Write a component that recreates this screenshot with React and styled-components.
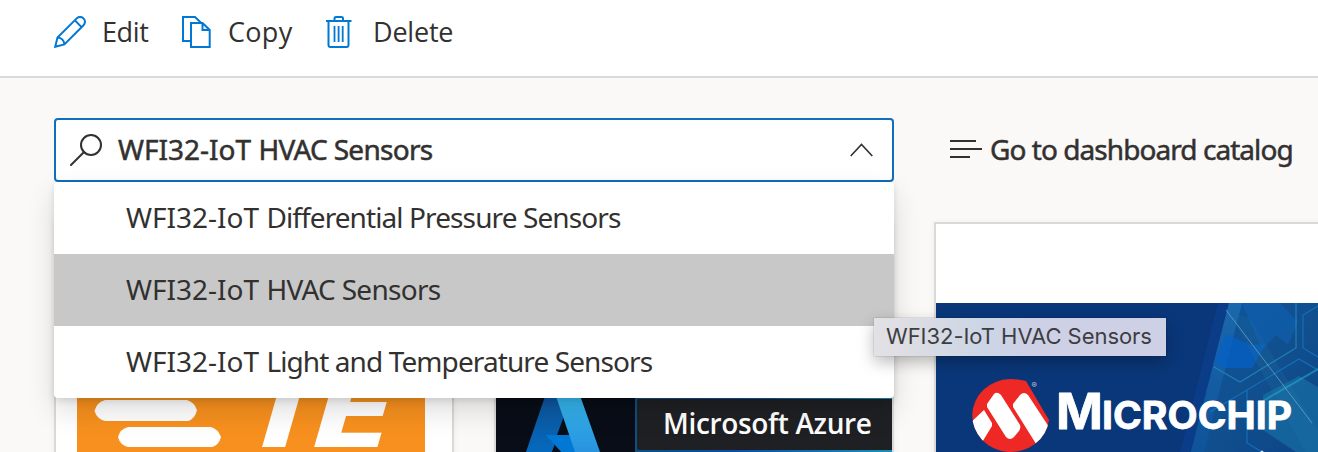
import React from "react";
import styled, { createGlobalStyle } from "styled-components";

const Global = createGlobalStyle`
  * { box-sizing: border-box; }
  html, body { margin: 0; overflow: hidden; }
  body { background: #faf9f8; font-family: "Noto Sans", "Open Sans", sans-serif; color: #323130; }
  svg { display: block; flex: none; }
`;

const Page = styled.div`
  width: 1318px;
  height: 452px;
  overflow: hidden;
  background: #faf9f8;
`;

const Toolbar = styled.header`
  display: flex;
  height: 78px;
  padding: 12px 0 0 54px;
  background: #fff;
  border-bottom: 2px solid #d8dada;
`;

const Command = styled.button`
  display: flex;
  align-items: center;
  gap: ${(p) => p.$gap}px;
  width: ${(p) => p.$width}px;
  height: 40px;
  padding: 0;
  border: 0;
  background: none;
  color: #323130;
  font: 400 27px/40px "Open Sans", "Noto Sans", sans-serif;
  letter-spacing: ${(p) => p.$spacing || 0}px;
  white-space: nowrap;
`;

const Main = styled.main`
  padding: 40px 0 0 54px;
`;

const PickerRow = styled.div`
  display: flex;
  align-items: center;
  gap: 56px;
  height: 64px;
`;

const Picker = styled.div`
  position: relative;
  flex: none;
  width: 840px;
  height: 64px;
`;

const Field = styled.div`
  display: flex;
  align-items: center;
  height: 64px;
  padding: 0 19px 0 14px;
  background: #fff;
  border: 2px solid #106ebe;
  border-radius: 4px;
`;

const Value = styled.span`
  flex: 1;
  padding: 0 0 2px 16px;
  font-size: 28px;
  line-height: 40px;
  -webkit-text-stroke: 0.5px #323130;
  white-space: nowrap;
`;

const Tight = styled.span`
  letter-spacing: ${(p) => p.$by}px;
`;

const Menu = styled.ul`
  position: absolute;
  z-index: 2;
  top: 64px;
  left: 0;
  width: 840px;
  margin: 0;
  padding: 0;
  list-style: none;
  background: #fff;
  border-radius: 4px;
  box-shadow: 0 12.8px 28.8px rgba(0, 0, 0, 0.132), 0 2.4px 7.2px rgba(0, 0, 0, 0.108);
`;

const Option = styled.li`
  height: 72px;
  padding-left: 72px;
  font-size: 28px;
  line-height: 70px;
  white-space: nowrap;
  background: ${(p) => (p.$active ? "#c8c8c8" : "transparent")};
`;

const Tooltip = styled.div`
  position: absolute;
  z-index: 3;
  top: 200px;
  left: 820px;
  width: 292px;
  height: 38px;
  padding-left: 12px;
  background: linear-gradient(90deg, #e2e1e5 0, #dcdde3 40px, #ccd6e5 105px, #ced1e6 150px, #ced1e6 100%);
  box-shadow: 0 0 1px rgba(0, 0, 0, 0.4), 0 6px 16px rgba(0, 0, 0, 0.28);
  color: #3d3e42;
  font: 400 22px/37px Inter, sans-serif;
  letter-spacing: -0.04px;
  white-space: nowrap;
`;

const CatalogLink = styled.a`
  display: flex;
  align-items: center;
  gap: 8px;
  padding-bottom: 2px;
  font-size: 28px;
  line-height: 40px;
  letter-spacing: -0.94px;
  -webkit-text-stroke: 0.5px #323130;
  white-space: nowrap;
`;

const Cards = styled.section`
  display: flex;
  gap: 40px;
  margin-top: 40px;
`;

const Card = styled.article`
  flex: none;
  width: 400px;
  height: 400px;
  padding: 79px 0 0 ${(p) => p.$inset || 0}px;
  background: #fff;
  border: 2px solid #d9d9d9;
  box-shadow: 0 1px 6px rgba(0, 0, 0, 0.06);
`;

const PencilIcon = () => (
  <svg width="32" height="32" viewBox="0 0 32 32" fill="none" stroke="#0078d4" strokeWidth="2">
    <path d="M1.2 30.8 3.5 21.5 22.7 2.4a4.7 4.7 0 0 1 6.8 0 4.7 4.7 0 0 1 0 6.8L10.4 28.4Z" />
    <path d="M20.8 4.3 27.6 11.1M3.5 21.5c3.8.2 6.6 3 6.9 6.9" />
  </svg>
);

const CopyIcon = () => (
  <svg width="30" height="32" viewBox="0 0 30 32" fill="none" stroke="#0078d4" strokeWidth="2">
    <path d="M8 25H1V1H13L19 6.7" />
    <path d="M9 7H20.5L27.7 14V31H9ZM20.5 7V14H27.7" />
  </svg>
);

const TrashIcon = () => (
  <svg width="26" height="32" viewBox="0 0 26 32" fill="none" stroke="#0078d4" strokeWidth="2">
    <path d="M0 5H25.5M8.500 5V2.500Q8.500 1 10 1H15.500Q17 1 17 2.500V5M2.500 5V29Q2.500 31 4.500 31H20.500Q22.500 31 22.500 29V5" />
    <path strokeWidth="1.800" d="M8.500 10V26M12.600 10V26M16.700 10V26" />
  </svg>
);

const SearchIcon = () => (
  <svg width="32" height="32" viewBox="0 0 32 32" fill="none" stroke="#323130" strokeWidth="2">
    <circle cx="21" cy="11" r="10" />
    <path d="M14 18 1 31" strokeLinecap="round" />
  </svg>
);

const ChevronUpIcon = () => (
  <svg width="23" height="14" viewBox="0 0 23 14" fill="none" stroke="#323130" strokeWidth="1.600">
    <path d="M.7 13 11.500 1.500 22.300 13" />
  </svg>
);

const LinesIcon = () => (
  <svg width="32" height="20" viewBox="0 0 32 20" stroke="#323130" strokeWidth="2">
    <path d="M0 2H26M0 10H32M0 18H20" />
  </svg>
);

const TeBanner = () => (
  <svg width="348" height="149" viewBox="77 303 348 149">
    <rect x="77" y="303" width="348" height="149" fill="#f7901e" />
    <g fill="#fff">
      <path d="M105 400H187Q194 402 197 410Q195 419 188 421H105Q97 419 94.500 411Q97 402 105 400Z" />
      <path d="M128 427H211Q218 429 221 437Q219 445 212 447H128Q120 445 118 437Q120 429 128 427Z" />
      <g fontFamily="DejaVu Sans" fontWeight="700" fontSize="100">
        <text transform="translate(232 447) skewX(-16) scale(1.22 1)">T</text>
        <text transform="translate(303 447) skewX(-16) scale(1.22 1)">E</text>
      </g>
    </g>
  </svg>
);

const AzureBanner = () => (
  <svg width="396" height="149" viewBox="496 303 396 149">
    <defs>
      <linearGradient id="azLeft" x1="0" y1="0" x2="0" y2="1">
        <stop offset="0" stopColor="#114a8b" />
        <stop offset="1" stopColor="#0669bc" />
      </linearGradient>
      <linearGradient id="azRight" x1="0" y1="0" x2="0" y2="1">
        <stop offset="0" stopColor="#3ccbf4" />
        <stop offset="1" stopColor="#2892df" />
      </linearGradient>
      <linearGradient id="azEdge">
        <stop offset="0" stopColor="#0f4f80" />
        <stop offset=".4" stopColor="#0c4fa3" />
        <stop offset="1" stopColor="#1c8fb4" />
      </linearGradient>
    </defs>
    <rect x="496" y="303" width="396" height="149" fill="#080d17" />
    <path d="M554 370H581L564 418L552 452H526Z" fill="url(#azLeft)" />
    <path d="M564 416 557 435H571Z" fill="#080d17" />
    <path d="M546 435H572L580 452H561Z" fill="#0078d4" />
    <path d="M555 446 561 452H552Z" fill="#080d17" />
    <path d="M547 370H571L600 452H575Z" fill="url(#azRight)" />
    <rect x="635" y="397" width="257" height="55" fill="url(#azEdge)" />
    <rect x="637" y="399" width="257" height="51" rx="2" fill="#1f2024" />
    <text x="663" y="434" fill="#fff" fontFamily="Open Sans, Noto Sans, sans-serif" fontSize="28" fontWeight="600" textLength="209">Microsoft Azure</text>
  </svg>
);

const MicrochipBanner = () => (
  <svg width="382" height="149" viewBox="936 303 382 149">
    <defs>
      <linearGradient id="mcSky" x1="0" y1="0" x2="1" y2="1">
        <stop offset="0" stopColor="#0c56a0" />
        <stop offset=".5" stopColor="#11508f" />
        <stop offset="1" stopColor="#0d4487" />
      </linearGradient>
      <linearGradient id="mcBand" x1="0" y1="0" x2="0" y2="1">
        <stop offset="0" stopColor="#1b68ab" />
        <stop offset="1" stopColor="#0f539a" />
      </linearGradient>
      <clipPath id="mcDisc">
        <path d="M1026 381Q1018 379 1010 379A38.500 36.500 0 1 0 1049 420Z" />
      </clipPath>
    </defs>
    <rect x="936" y="303" width="382" height="149" fill="#0a377a" />
    <path d="M1218 303H1318V452H1180Z" fill="#0a3c88" />
    <path d="M1229 303H1318V452H1191Z" fill="url(#mcSky)" />
    <path d="M1229 303H1242L1204 452H1191Z" fill="url(#mcBand)" />
    <path d="M1226 334 1251 345 1266 344 1252 368H1222L1214 362Z" fill="#0560c6" opacity=".75" />
    <path d="M1242 303H1280L1298 322 1288 345 1276 335 1262 350Z" fill="#1067bd" opacity=".45" />
    <path d="M1229 312 1250 318 1318 430V452H1305Z" fill="#1d6a9f" opacity=".25" />
    <path d="M1263 395 1299 376 1318 387V452H1296L1263 430Z" fill="#1c83b3" opacity=".45" />
    <g fill="none" stroke="#1679c7" strokeWidth="1.200" opacity=".75">
      <path d="M1296 303V348L1240 382 1214 367" stroke="#248fc5" />
      <path d="M1318 306 1303 315V348L1318 357M1318 370 1299 359 1247 390V443L1262 452M1247 390 1210 412" />
    </g>
    <path d="M1263 401 1318 369" stroke="#21a8c9" strokeWidth="2" opacity=".6" />
    <path d="M1226 310 1312 423" stroke="#8bb5d5" strokeWidth="1" opacity=".6" />
    <g clipPath="url(#mcDisc)">
      <rect x="970" y="378" width="82" height="76" fill="#ee2824" />
      <path d="M994 394Q997 391 1001 395L1020 425Q1021 428 1019 431L1014 437Q1010 441 1006 437L987 407V404Z" fill="#fff" />
      <path d="M1020 395Q1024 391 1028 395L1053 433 1038 447 1013 407V404Z" fill="#fff" />
      <path d="M984 410 992 423V426L981 444 966 427Z" fill="#fff" />
    </g>
    <g fill="#fff" fontFamily="Inter, sans-serif" fontWeight="700">
      <text x="1031.500" y="387.500" fontSize="8" fontWeight="400" opacity=".7">®</text>
      <g stroke="#fff" strokeWidth=".8" strokeLinejoin="round">
        <text x="1056" y="429" fontSize="50" textLength="47" lengthAdjust="spacingAndGlyphs">M</text>
        <text x="1102" y="429" fontSize="38" textLength="190" lengthAdjust="spacingAndGlyphs">ICROCHIP</text>
      </g>
    </g>
    <circle cx="1262" cy="452" r="1.500" fill="#cfe0f0" />
  </svg>
);

export default function App() {
  return (
    <Page>
      <Global />
      <Toolbar>
        <Command $gap={16} $width={128} $spacing={-0.4}><PencilIcon />Edit</Command>
        <Command $gap={16} $width={144} $spacing={0.3}><CopyIcon />Copy</Command>
        <Command $gap={21} $width={140} $spacing={-0.2}><TrashIcon />Delete</Command>
      </Toolbar>
      <Main>
        <PickerRow>
          <Picker>
            <Field>
              <SearchIcon />
              <Value>WFI32-IoT <Tight $by={-0.7}>HVAC Sensors</Tight></Value>
              <ChevronUpIcon />
            </Field>
            <Menu>
              <Option>WFI32-IoT <Tight $by={-0.9}>Differential Pressure Sensors</Tight></Option>
              <Option $active>WFI32-IoT <Tight $by={-0.7}>HVAC Sensors</Tight></Option>
              <Option>WFI32-IoT <Tight $by={-0.9}>Light and Temperature Sensors</Tight></Option>
            </Menu>
            <Tooltip>WFI32-IoT HVAC Sensors</Tooltip>
          </Picker>
          <CatalogLink><LinesIcon />Go to dashboard catalog</CatalogLink>
        </PickerRow>
        <Cards>
          <Card $inset={21}><TeBanner /></Card>
          <Card><AzureBanner /></Card>
          <Card><MicrochipBanner /></Card>
        </Cards>
      </Main>
    </Page>
  );
}
